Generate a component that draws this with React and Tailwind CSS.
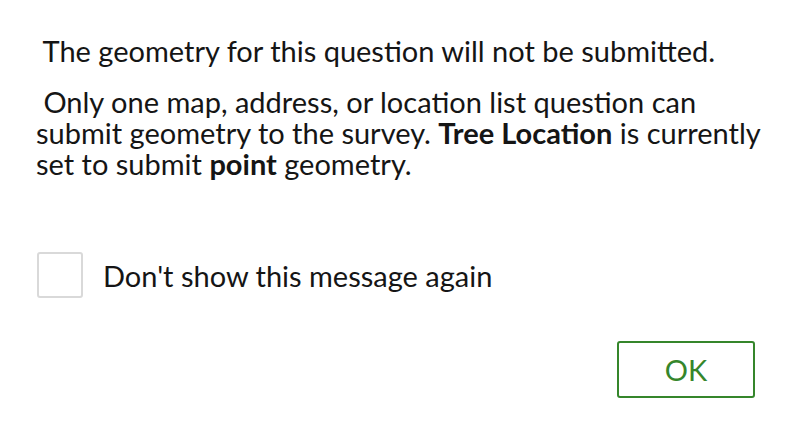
export default function App() {
  return (
    <div
      className="w-[792px] h-[437px] bg-white text-[#151515] flex flex-col px-[36px]"
      style={{ fontFamily: 'Lato, "Noto Sans", sans-serif' }}
    >
      <div className="pt-[35px] text-[29px] leading-[31px]">
        <p className="whitespace-pre"> The geometry for this question will not be submitted.</p>
        <p className="mt-[20px] whitespace-pre">
          {' Only one map, address, or location list question can'}
          <br />
          {'submit geometry to the survey. '}
          <b className="font-bold">Tree Location</b>
          {' is currently'}
          <br />
          {'set to submit '}
          <b className="font-bold">point</b>
          {' geometry.'}
        </p>
      </div>

      <label className="mt-[73px] flex items-center gap-[20px] pl-[1px]">
        <span className="w-[46px] h-[46px] border-2 border-[#d9d9d9] rounded-[3px] bg-white shrink-0" />
        <span className="text-[29px] leading-[31px]">Don't show this message again</span>
      </label>

      <div className="mt-[43px] flex justify-end pr-[1px]">
        <button className="w-[138px] h-[57px] border-2 border-[#35862b] rounded-[3px] text-[#35862b] text-[29px] flex items-center justify-center">
          OK
        </button>
      </div>
    </div>
  );
}
